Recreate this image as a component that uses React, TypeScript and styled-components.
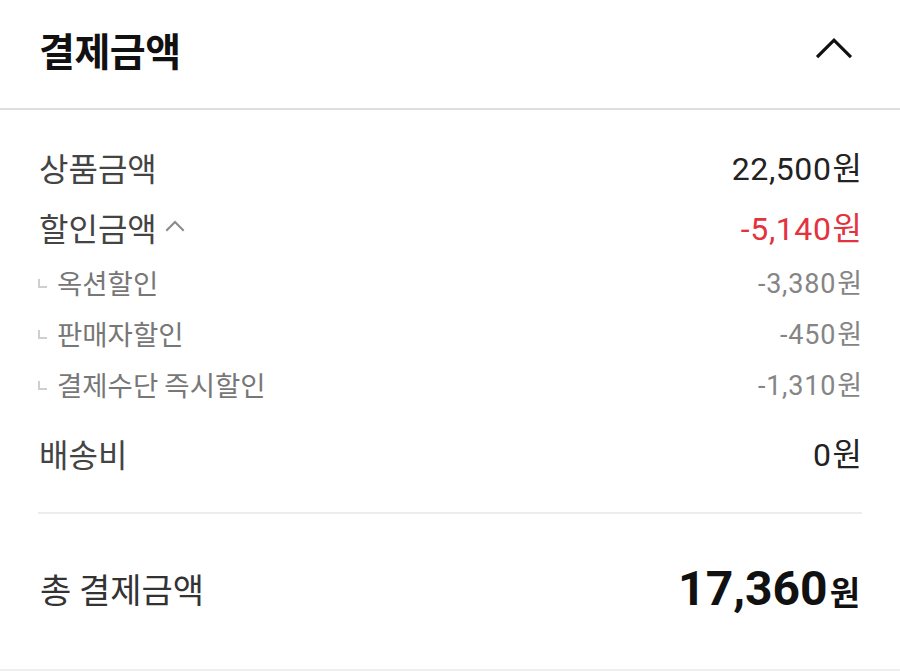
import React from 'react'
import styled, { createGlobalStyle } from 'styled-components'

const GlobalStyle = createGlobalStyle`
  html, body {
    margin: 0;
    padding: 0;
    background: #fff;
  }
  body {
    font-family: 'Noto Sans CJK KR', 'Noto Sans', sans-serif;
    -webkit-font-smoothing: antialiased;
  }
`

type Line = {
  label: string
  amount: string
}

const discounts: Line[] = [
  { label: '옥션할인', amount: '-3,380' },
  { label: '판매자할인', amount: '-450' },
  { label: '결제수단 즉시할인', amount: '-1,310' },
]

const ChevronUp = ({ size, stroke, color }: { size: number; stroke: number; color: string }) => (
  <svg width={size} height={size / 2 + stroke} viewBox={`0 0 ${size} ${size / 2 + stroke}`} fill="none">
    <polyline
      points={`${stroke},${size / 2} ${size / 2},${stroke} ${size - stroke},${size / 2}`}
      stroke={color}
      strokeWidth={stroke}
      strokeLinecap="square"
      strokeLinejoin="miter"
    />
  </svg>
)

const App = () => {
  return (
    <>
      <GlobalStyle />
      <Panel>
        <Header>
          <Title>결제금액</Title>
          <ToggleButton aria-label="접기">
            <ChevronUp size={38} stroke={3.2} color="#111" />
          </ToggleButton>
        </Header>

        <Details>
          <Row>
            <Label>상품금액</Label>
            <Amount>
              22,500<Won>원</Won>
            </Amount>
          </Row>
          <Row>
            <Label>
              할인금액
              <SmallToggle>
                <ChevronUp size={20} stroke={2} color="#8a8a8a" />
              </SmallToggle>
            </Label>
            <Amount $tone="red">
              -5,140<Won>원</Won>
            </Amount>
          </Row>
          {discounts.map((d) => (
            <SubRow key={d.label}>
              <SubLabel>
                <Corner />
                {d.label}
              </SubLabel>
              <SubAmount>
                {d.amount}
                <Won>원</Won>
              </SubAmount>
            </SubRow>
          ))}
          <Row $spaced>
            <Label>배송비</Label>
            <Amount>
              0<Won>원</Won>
            </Amount>
          </Row>
        </Details>

        <Total>
          <TotalLabel>총 결제금액</TotalLabel>
          <TotalAmount>
            17,360<TotalWon>원</TotalWon>
          </TotalAmount>
        </Total>
      </Panel>
    </>
  )
}

export default App

const Panel = styled.section`
  width: 900px;
  height: 672px;
  background: #fff;
  box-sizing: border-box;
`

const Header = styled.header`
  height: 108px;
  padding: 0 47px 0 39px;
  display: flex;
  align-items: center;
  justify-content: space-between;
  border-bottom: 2px solid #dedede;
  box-sizing: content-box;
`

const Title = styled.h2`
  margin: 0;
  font-size: 39px;
  font-weight: 700;
  color: #111;
  letter-spacing: -0.5px;
  line-height: 1;
  padding-bottom: 10px;
`

const ToggleButton = styled.button`
  border: 0;
  background: none;
  padding: 0;
  display: flex;
  margin-bottom: 12px;
  cursor: pointer;
`

const Details = styled.div`
  margin: 0 38px;
  padding: 27px 0 29px;
  border-bottom: 2px solid #ededed;
`

const Row = styled.div<{ $spaced?: boolean }>`
  height: 60px;
  display: flex;
  align-items: center;
  justify-content: space-between;
  padding-left: 1px;
  margin-top: ${(p) => (p.$spaced ? '13px' : '0')};
`

const Label = styled.span`
  display: flex;
  align-items: center;
  font-size: 32px;
  color: #444;
  line-height: 1;
`

const SmallToggle = styled.span`
  display: flex;
  margin-left: 8px;
  margin-top: -2px;
`

const Amount = styled.span<{ $tone?: 'red' }>`
  font-family: Roboto, 'Noto Sans CJK KR', sans-serif;
  font-size: 32px;
  letter-spacing: 0.6px;
  color: ${(p) => (p.$tone === 'red' ? '#e2333f' : '#222')};
  line-height: 1;
`

const Won = styled.span`
  font-family: 'Noto Sans CJK KR', sans-serif;
  letter-spacing: 0;
  margin-left: 1px;
`

const SubRow = styled.div`
  height: 51px;
  display: flex;
  align-items: center;
  justify-content: space-between;
`

const SubLabel = styled.span`
  display: flex;
  align-items: center;
  font-size: 27.5px;
  color: #777;
  line-height: 1;
`

const Corner = styled.span`
  width: 7px;
  height: 7px;
  border-left: 2px solid #cfcfcf;
  border-bottom: 2px solid #cfcfcf;
  margin: 2px 10px 0 0;
`

const SubAmount = styled.span`
  font-family: Roboto, 'Noto Sans CJK KR', sans-serif;
  font-size: 27px;
  letter-spacing: 0.8px;
  color: #858585;
  line-height: 1;
`

const Total = styled.div`
  height: 150px;
  margin: 0 40px 6px;
  display: flex;
  align-items: center;
  justify-content: space-between;
  position: relative;
  &::after {
    content: '';
    position: absolute;
    left: -40px;
    right: -40px;
    bottom: -7px;
    height: 2px;
    background: #eeeeee;
  }
`

const TotalLabel = styled.span`
  font-size: 34px;
  color: #333;
  line-height: 1;
`

const TotalAmount = styled.span`
  font-family: Roboto, 'Noto Sans CJK KR', sans-serif;
  font-size: 48px;
  font-weight: 700;
  color: #111;
  line-height: 1;
  display: flex;
  align-items: baseline;
`

const TotalWon = styled.span`
  font-family: 'Noto Sans CJK KR', sans-serif;
  font-size: 33px;
  font-weight: 700;
  margin-left: 2px;
`
